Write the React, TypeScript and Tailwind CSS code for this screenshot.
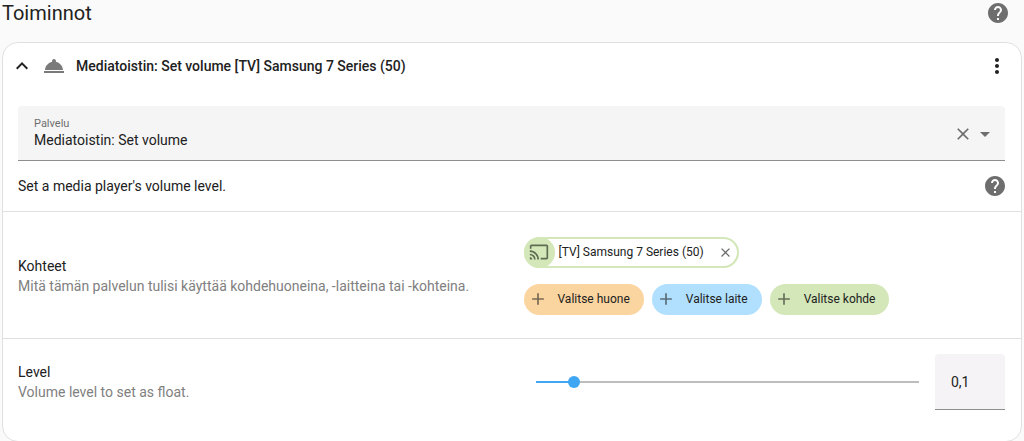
import { useState } from 'react'
import type { ReactNode } from 'react'
import {
  MdAdd,
  MdArrowDropDown,
  MdCast,
  MdClose,
  MdHelp,
  MdKeyboardArrowUp,
  MdMoreVert,
  MdRoomService,
} from 'react-icons/md'

const pickers = [
  { label: 'Valitse huone', color: 'bg-[#fbd5a0]' },
  { label: 'Valitse laite', color: 'bg-[#b0e0fd]' },
  { label: 'Valitse kohde', color: 'bg-[#d3e7b8]' },
]

interface SettingRowProps {
  title: string
  description: string
  className: string
  children: ReactNode
}

function SettingRow({ title, description, className, children }: SettingRowProps) {
  return (
    <div className={`flex items-center border-t border-[#e0e0e0] pl-[15px] pr-4 ${className}`}>
      <div className="min-w-0 flex-1 pr-4 text-sm leading-5">
        <p>{title}</p>
        <p className="text-[#808080]">{description}</p>
      </div>
      {children}
    </div>
  )
}

function TargetChip({ name }: { name: string }) {
  return (
    <div className="flex h-[31px] w-fit items-center rounded-full border-2 border-[#d3e7b8] pr-1">
      <span className="-ml-0.5 flex size-[31px] items-center justify-center rounded-full bg-[#d3e7b8]">
        <MdCast className="size-5 text-[#5f6b52]" />
      </span>
      <span className="ml-1 text-xs">{name}</span>
      <button type="button" aria-label={`Poista ${name}`} className="ml-3.5 text-[#6b6b6b]">
        <MdClose className="size-[15px]" />
      </button>
    </div>
  )
}

export default function App() {
  const [service, setService] = useState('Mediatoistin: Set volume')
  const [level, setLevel] = useState(0.1)

  return (
    <main className="min-h-screen bg-[#fafafa] font-[Roboto,sans-serif] text-[#212121]">
      <header className="flex h-[42px] items-start justify-between pl-0.5 pr-3.5 pt-px">
        <h1 className="text-xl leading-6">Toiminnot</h1>
        <a href="#toiminnot" aria-label="Ohje" className="text-[#6e6e6e]">
          <MdHelp className="size-6" />
        </a>
      </header>

      <section className="mx-0.5 rounded-2xl border border-[#e0e0e0] bg-white">
        <div className="flex h-[47px] items-center pb-0.5 pl-[7px] pr-3">
          <button type="button" aria-label="Pienennä">
            <MdKeyboardArrowUp className="size-6" />
          </button>
          <MdRoomService className="ml-2 size-6 text-[#7a7a7a]" />
          <h2 className="ml-2.5 flex-1 text-sm font-medium">
            Mediatoistin: Set volume [TV] Samsung 7 Series (50)
          </h2>
          <button type="button" aria-label="Valikko">
            <MdMoreVert className="size-6" />
          </button>
        </div>

        <div className="pl-[15px] pr-4 pt-4">
          <div className="flex h-[55px] items-center rounded-t border-b border-[#8e8e8e] bg-[#f5f5f5] pl-4 pr-2 pt-0.5">
            <div className="flex-1">
              <label htmlFor="service" className="block text-[11px] leading-3 text-[#6e6e6e]">
                Palvelu
              </label>
              <input
                id="service"
                value={service}
                onChange={e => setService(e.target.value)}
                className="block w-full bg-transparent text-sm leading-5 outline-none"
              />
            </div>
            <button type="button" aria-label="Tyhjennä" onClick={() => setService('')} className="text-[#6e6e6e]">
              <MdClose className="size-5" />
            </button>
            <button type="button" aria-label="Avaa lista" className="text-[#6e6e6e]">
              <MdArrowDropDown className="size-6" />
            </button>
          </div>
          <div className="-mr-0.5 flex h-[50px] items-center justify-between">
            <p className="text-sm">Set a media player's volume level.</p>
            <a href="#set-volume" aria-label="Ohje" className="text-[#6e6e6e]">
              <MdHelp className="size-6" />
            </a>
          </div>
        </div>

        <SettingRow
          title="Kohteet"
          description="Mitä tämän palvelun tulisi käyttää kohdehuoneina, -laitteina tai -kohteina."
          className="h-[127px] pt-px"
        >
          <div className="flex w-[calc(50%-12px)] flex-col gap-4">
            <TargetChip name="[TV] Samsung 7 Series (50)" />
            <div className="flex gap-2">
              {pickers.map(p => (
                <button
                  key={p.label}
                  type="button"
                  className={`flex h-[31px] items-center whitespace-nowrap rounded-full pl-1 pr-3.5 text-xs ${p.color}`}
                >
                  <MdAdd className="mr-2.5 size-5 opacity-60" />
                  {p.label}
                </button>
              ))}
            </div>
          </div>
        </SettingRow>

        <SettingRow title="Level" description="Volume level to set as float." className="h-[103px] pb-4">
          <div className="flex w-[calc(50%-12px)] items-center gap-4 pl-3">
            <div className="relative h-0.5 flex-1 bg-[#bdbdbd]">
              <div className="h-full bg-[#3ea6f2]" style={{ width: `${level * 100}%` }} />
              <input
                type="range"
                aria-label="Level"
                min={0}
                max={1}
                step={0.01}
                value={level}
                onChange={e => setLevel(Number(e.target.value))}
                className="absolute -inset-x-1.5 -top-[5px] h-3 w-[calc(100%+12px)] appearance-none bg-transparent [&::-webkit-slider-thumb]:size-3 [&::-webkit-slider-thumb]:appearance-none [&::-webkit-slider-thumb]:rounded-full [&::-webkit-slider-thumb]:bg-[#3ea6f2]"
              />
            </div>
            <input
              type="text"
              inputMode="decimal"
              aria-label="Level, arvo"
              value={String(level).replace('.', ',')}
              onChange={e => setLevel(Math.min(1, Number(e.target.value.replace(',', '.')) || 0))}
              className="h-14 w-[70px] rounded-t border-b border-[#8e8e8e] bg-[#f5f3f6] px-4 text-sm outline-none"
            />
          </div>
        </SettingRow>
      </section>
    </main>
  )
}
